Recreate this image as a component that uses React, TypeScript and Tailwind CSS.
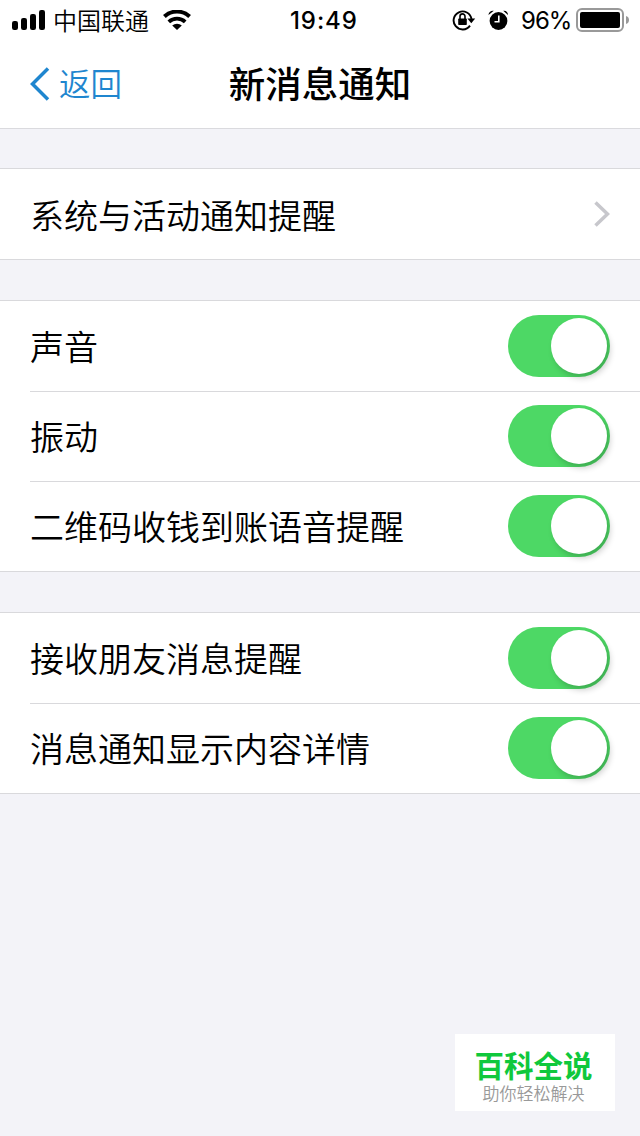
import React, { useState } from 'react';

interface SwitchRowProps {
  label: string;
  first?: boolean;
}

const Toggle: React.FC<{ on: boolean; onChange: () => void }> = ({ on, onChange }) => (
  <button
    role="switch"
    aria-checked={on}
    onClick={onChange}
    className={`flex h-[62px] w-[102px] items-center overflow-visible rounded-full px-[3px] ${on ? 'justify-end bg-[#4dd865]' : 'justify-start bg-[#e5e5ea]'}`}
  >
    <span className="size-[56px] rounded-full bg-white shadow-[3px_4px_6px_rgba(0,0,0,0.2)]" />
  </button>
);

const SwitchRow: React.FC<SwitchRowProps> = ({ label, first }) => {
  const [on, setOn] = useState(true);

  return (
    <div className={`ml-[30px] flex h-[90px] items-center justify-between pr-[30px] ${first ? '' : 'border-t border-[#d9d9dc] pb-[2px]'}`}>
      <span className="text-[34px] leading-none font-[350]">{label}</span>
      <Toggle on={on} onChange={() => setOn(!on)} />
    </div>
  );
};

const SwitchGroup: React.FC<{ labels: string[] }> = ({ labels }) => (
  <section className="mt-10 border-y border-[#d9d9dc] bg-white">
    {labels.map((label, i) => (
      <SwitchRow key={label} label={label} first={i === 0} />
    ))}
  </section>
);

const StatusBar = () => (
  <div className="flex h-10 items-center pl-3 text-[24px] leading-none">
    <svg width="34" height="20" viewBox="0 0 34 20">
      <rect x="0" y="11" width="6" height="9" rx="2.2" />
      <rect x="9" y="8" width="6" height="12" rx="2.2" />
      <rect x="18" y="4" width="6" height="16" rx="2.2" />
      <rect x="27" y="0" width="6" height="20" rx="2.2" />
    </svg>
    <span className="ml-[7px] w-[97px] font-[350]">中国联通</span>
    <svg className="ml-[13px]" width="28" height="20" viewBox="0 0 28 20">
      <path d="M1.400 6.500a18.500 18.500 0 0 1 25.200 0" fill="none" stroke="#000" strokeWidth="4" />
      <path d="M5.800 11.900a12 12 0 0 1 16.400 0" fill="none" stroke="#000" strokeWidth="3.800" />
      <path d="M9.200 15.600a7 7 0 0 1 9.600 0L14 20z" />
    </svg>
    <span className="ml-[99px] w-[68px] pt-[2px] font-['Inter'] text-[24px] font-medium tracking-[0.9px]">19:49</span>
    <svg className="ml-[94px]" width="24" height="22" viewBox="0 0 24 22">
      <path d="M18 16.600A9 9 0 1 1 19.500 10" fill="none" stroke="#000" strokeWidth="1.900" />
      <path d="M15.400 9.500h7.800l-3.900 4.700z" />
      <rect x="6.200" y="9.400" width="8.600" height="6.600" rx="0.800" />
      <path d="M8 10V7.400a2.500 2.500 0 0 1 5 0V10" fill="none" stroke="#000" strokeWidth="1.600" />
    </svg>
    <svg className="ml-3" width="20" height="20" viewBox="0 0 20 20">
      <circle cx="10.500" cy="11" r="8.900" />
      <path d="M0.500 5C0.600 2 3 0.300 5.800 0.800zM15.200 0.800C18 0.300 20 2 20 5z" />
      <path d="M10.800 5.500v6.200H6.500" fill="none" stroke="#fff" strokeWidth="1.600" />
    </svg>
    <span className="ml-[13px] w-[50px] pt-[2px] font-['Inter'] text-[24px] tracking-[-1px]">96%</span>
    <svg className="ml-[4.500px]" width="54" height="24" viewBox="0 0 54 24">
      <rect x="1" y="1" width="46" height="22" rx="5" fill="none" stroke="#999" strokeWidth="2" />
      <rect x="4" y="4" width="40" height="16" rx="2" />
      <path d="M50 8c2.600 1 3 2.600 3 4s-.4 3-3 4z" fill="#999" />
    </svg>
  </div>
);

export default function App() {
  return (
    <div className="flex h-[1136px] w-[640px] flex-col bg-[#f3f3f8] font-['Noto_Sans_CJK_SC',sans-serif] text-black">
      <header className="h-[129px] border-b border-[#dadade] bg-white">
        <StatusBar />
        <div className="grid h-[88px] grid-cols-[1fr_auto_1fr] items-center">
          <button className="flex items-center pl-[30px] text-[31.5px] leading-none text-[#1f86cf]">
            <svg width="20" height="34" viewBox="0 0 20 34" fill="none" stroke="currentColor" strokeWidth="3.500">
              <path d="M18 1.500 2.500 17 18 32.500" />
            </svg>
            <span className="ml-[9px] pb-[3px] font-[350]">返回</span>
          </button>
          <h1 className="pb-[1px] text-[36.5px] leading-none font-medium">新消息通知</h1>
        </div>
      </header>

      <section className="mt-[39px] border-y border-[#d9d9dc] bg-white">
        <div className="flex h-[90px] items-center justify-between px-[30px]">
          <span className="pt-[1px] text-[34px] leading-none font-[350]">系统与活动通知提醒</span>
          <svg width="16" height="26" viewBox="0 0 16 26" fill="none" stroke="#c7c7cc" strokeWidth="3.500">
            <path d="M1.500 1.500 13.500 13 1.500 24.500" />
          </svg>
        </div>
      </section>

      <SwitchGroup labels={['声音', '振动', '二维码收钱到账语音提醒']} />
      <SwitchGroup labels={['接收朋友消息提醒', '消息通知显示内容详情']} />

      <footer className="mt-auto mr-[25px] mb-[25px] flex h-[77px] w-[160px] flex-col items-center self-end bg-white pt-[15px] pr-[3px]">
        <span className="text-[29.5px] leading-[30px] font-bold text-[#0fc83c]">百科全说</span>
        <span className="mt-[5px] text-[17px] leading-[18px] font-[350] text-[#999]">助你轻松解决</span>
      </footer>
    </div>
  );
}
